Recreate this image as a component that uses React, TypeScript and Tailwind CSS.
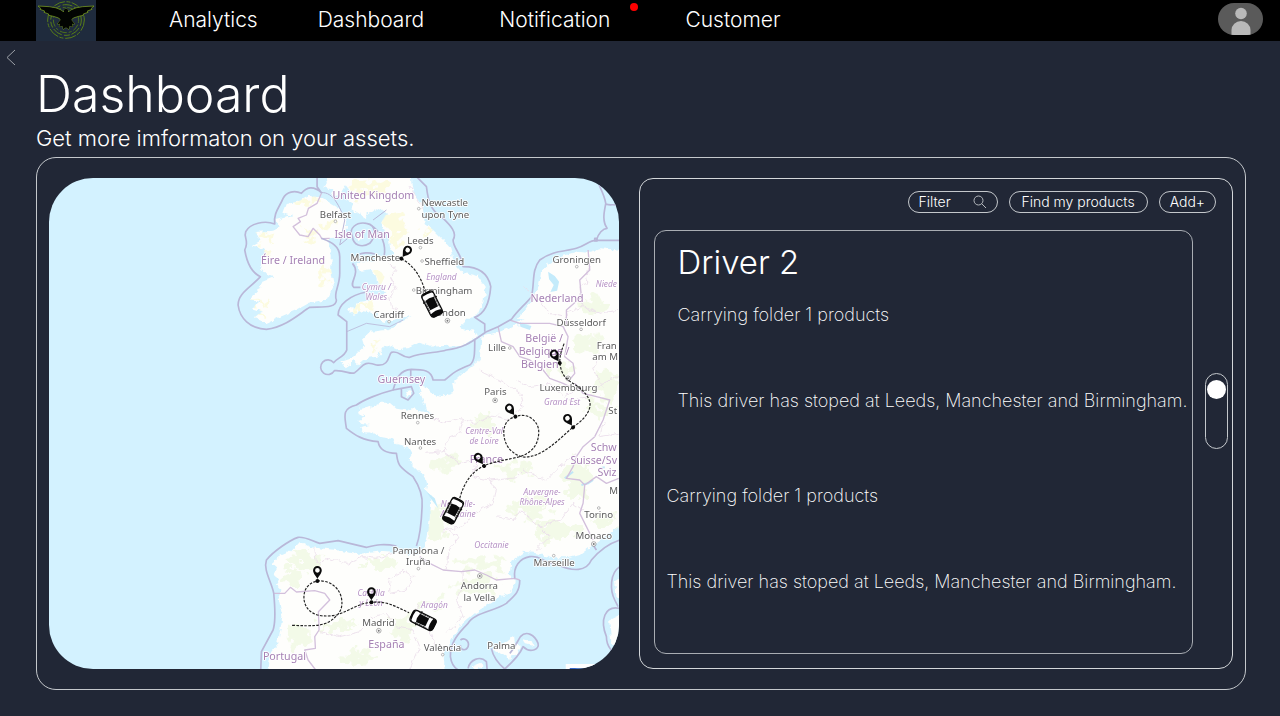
import React, { useState } from "react";

type Tone = "city" | "country" | "region";

interface MapLabel {
  x: number;
  y: number;
  text: string;
  tone: Tone;
}

const toneStyles: Record<Tone, string> = {
  city: "text-[29px] fill-[#5c5c5c]",
  country: "text-[32px] fill-[#a682b4]",
  region: "text-[25px] italic fill-[#b692c4]",
};

const mapLabels: MapLabel[] = [
  { x: 431, y: 88, text: "United Kingdom", tone: "country" },
  { x: 317, y: 143, text: "Belfast", tone: "city" },
  { x: 397, y: 204, text: "Isle of Man", tone: "country" },
  { x: 190, y: 283, text: "Éire / Ireland", tone: "country" },
  { x: 645, y: 109, text: "Newcastle", tone: "city" },
  { x: 647, y: 143, text: "upon Tyne", tone: "city" },
  { x: 572, y: 223, text: "Leeds", tone: "city" },
  { x: 437, y: 274, text: "Mancheste", tone: "city" },
  { x: 644, y: 284, text: "Sheffield", tone: "city" },
  { x: 635, y: 330, text: "England", tone: "region" },
  { x: 643, y: 371, text: "Birmingham", tone: "city" },
  { x: 440, y: 359, text: "Cymru /", tone: "region" },
  { x: 440, y: 389, text: "Wales", tone: "region" },
  { x: 477, y: 444, text: "Cardiff", tone: "city" },
  { x: 656, y: 437, text: "London", tone: "city" },
  { x: 515, y: 640, text: "Guernsey", tone: "country" },
  { x: 1041, y: 280, text: "Groningen", tone: "city" },
  { x: 1130, y: 352, text: "Niede", tone: "region" },
  { x: 982, y: 395, text: "Nederland", tone: "country" },
  { x: 1054, y: 468, text: "Düsseldorf", tone: "city" },
  { x: 943, y: 517, text: "België /", tone: "country" },
  { x: 943, y: 555, text: "Belgique /", tone: "country" },
  { x: 930, y: 593, text: "Belgien", tone: "country" },
  { x: 1131, y: 536, text: "Fran", tone: "city" },
  { x: 1126, y: 570, text: "am M", tone: "city" },
  { x: 802, y: 543, text: "Lille", tone: "city" },
  { x: 1016, y: 663, text: "Luxembourg", tone: "city" },
  { x: 797, y: 676, text: "Paris", tone: "city" },
  { x: 997, y: 706, text: "Grand Est", tone: "region" },
  { x: 1149, y: 731, text: "St", tone: "city" },
  { x: 563, y: 747, text: "Rennes", tone: "city" },
  { x: 571, y: 824, text: "Nantes", tone: "city" },
  { x: 763, y: 792, text: "Centre-Val", tone: "region" },
  { x: 763, y: 822, text: "de Loire", tone: "region" },
  { x: 770, y: 880, text: "France", tone: "country" },
  { x: 1122, y: 842, text: "Schw", tone: "country" },
  { x: 1092, y: 881, text: "Suisse/Sv", tone: "country" },
  { x: 1132, y: 918, text: "Sviz", tone: "country" },
  { x: 937, y: 975, text: "Auvergne-", tone: "region" },
  { x: 937, y: 1005, text: "Rhône-Alpes", tone: "region" },
  { x: 685, y: 1012, text: "Nouvelle-", tone: "region" },
  { x: 685, y: 1042, text: "Aquitaine", tone: "region" },
  { x: 1152, y: 972, text: "M", tone: "city" },
  { x: 1107, y: 1045, text: "Torino", tone: "city" },
  { x: 1092, y: 1108, text: "Monaco", tone: "city" },
  { x: 973, y: 1188, text: "Marseille", tone: "city" },
  { x: 785, y: 1134, text: "Occitanie", tone: "region" },
  { x: 566, y: 1151, text: "Pamplona /", tone: "city" },
  { x: 566, y: 1186, text: "Iruña", tone: "city" },
  { x: 749, y: 1258, text: "Andorra", tone: "city" },
  { x: 749, y: 1293, text: "la Vella", tone: "city" },
  { x: 614, y: 1315, text: "Aragón", tone: "region" },
  { x: 424, y: 1279, text: "Castilla", tone: "region" },
  { x: 424, y: 1309, text: "y León", tone: "region" },
  { x: 446, y: 1367, text: "Madrid", tone: "city" },
  { x: 470, y: 1433, text: "España", tone: "country" },
  { x: 638, y: 1443, text: "València", tone: "city" },
  { x: 815, y: 1436, text: "Palma", tone: "city" },
  { x: 164, y: 1469, text: "Portugal", tone: "country" },
];

const towns = [
  [317, 154], [567, 116], [572, 233], [577, 273], [552, 360], [478, 455], [1041, 290],
  [1054, 478], [840, 534], [564, 758], [572, 834], [1107, 1014], [972, 1157], [566, 1196], [639, 1454],
];

const capitals = [[653, 452], [1015, 625], [796, 691], [1092, 1122], [750, 1218], [447, 1382]];

// pale patches of forest and upland: x, y, rx, ry
const woods = [
  [1080, 520, 50, 26], [1130, 640, 34, 50], [1000, 600, 40, 18], [1110, 720, 40, 24], [900, 1010, 60, 34],
  [620, 1060, 34, 60], [980, 1080, 70, 30], [1040, 930, 40, 60], [760, 1180, 70, 18], [740, 1250, 60, 26],
  [450, 1180, 50, 14], [230, 1170, 50, 24], [190, 1220, 34, 26], [330, 1370, 50, 14], [520, 1380, 30, 44],
  [210, 1400, 30, 40], [760, 760, 40, 22], [650, 880, 30, 26], [860, 900, 50, 20], [600, 1300, 40, 18],
  [1090, 400, 34, 30], [1130, 1050, 30, 24], [380, 1460, 60, 18],
];

const uplands = [
  [420, 55, 60, 26], [490, 155, 34, 36], [500, 215, 18, 30], [220, 100, 34, 14], [110, 195, 26, 10],
  [80, 395, 24, 8], [90, 435, 26, 8], [290, 310, 14, 30], [430, 340, 16, 34], [400, 400, 26, 10],
  [432, 535, 8, 16], [600, 175, 26, 10], [240, 195, 18, 10], [290, 165, 16, 12], [90, 250, 14, 12],
];

function Pin({ x, y, turn = 0 }: { x: number; y: number; turn?: number }) {
  return (
    <g transform={`translate(${x} ${y}) rotate(${turn})`}>
      <circle r="6" fill="#0b0b0b" />
      <path
        fillRule="evenodd"
        fill="#0b0b0b"
        d="M0 -6C-4 -15 -13 -22 -13 -32A13 13 0 1 1 13 -32C13 -22 4 -15 0 -6ZM0 -39A7 7 0 1 0 0 -25A7 7 0 1 0 0 -39Z"
      />
    </g>
  );
}

function Car({ x, y, turn }: { x: number; y: number; turn: number }) {
  return (
    <g transform={`translate(${x} ${y}) rotate(${turn})`}>
      <rect x="-19" y="-38" width="38" height="76" rx="10" fill="#fff" stroke="#0b0b0b" strokeWidth="4" />
      <path d="M-19 -27Q-17 -39 0 -39Q17 -39 19 -27L14 -32Q0 -35 -14 -32Z" fill="#0b0b0b" />
      <path d="M-14 -17Q0 -22 14 -17L13 14L-13 14Z" fill="#0b0b0b" />
      <path d="M-18 26Q0 20 18 26L18 34Q16 39 10 39L-10 39Q-16 39 -18 34Z" fill="#0b0b0b" />
      <path d="M-16 -20V20M16 -20V20" stroke="#0b0b0b" strokeWidth="2" strokeDasharray="10 3" />
      <path d="M-23 -14H-19M19 -14H23" stroke="#0b0b0b" strokeWidth="4" />
    </g>
  );
}

function AssetMap() {
  return (
    <svg
      viewBox="-543 24 1710 1473"
      preserveAspectRatio="xMidYMid slice"
      role="img"
      aria-label="Asset map"
      className="block size-full bg-[#d3f2ff]"
    >
      <defs>
        <path
          id="continent"
          d="M1180 240L1110 235L1080 245L1050 243L1000 258L950 285L935 300L928 345L905 395L880 430L860 446L885 448L862 456L902 462L850 468L810 485L755 500L750 570L700 610L668 640L672 665L632 680L604 672L598 655L572 646L570 665L580 690L590 722L612 735L570 722L552 712L540 722L500 716L480 698L450 698L430 708L388 718L385 730L408 742L386 750L398 762L420 765L388 772L400 785L430 790L450 800L490 808L500 822L535 832L545 850L540 875L565 900L585 918L592 940L588 960L605 985L600 1050L592 1110L580 1142L560 1155L520 1150L450 1145L380 1152L320 1140L240 1132L220 1122L200 1124L180 1145L150 1158L125 1180L142 1195L132 1215L148 1228L138 1245L155 1262L146 1282L158 1340L145 1420L122 1450L115 1510H645L642 1460L650 1435L670 1400L700 1360L735 1330L800 1290L845 1265L855 1235L840 1210L845 1175L885 1145L920 1150L970 1165L1015 1165L1050 1155L1090 1125L1140 1090L1180 1062Z"
        />
        <path
          id="britain"
          d="M285 10L295 40L280 52L310 60L302 80L332 74L348 46L366 70L350 92L372 100L365 118L402 142L440 115L472 128L455 158L465 185L478 205L480 232L494 252L470 262L440 262L430 276L402 272L378 282L392 302L424 298L440 318L450 345L470 370L440 378L420 392L390 395L355 422L372 434L400 424L440 432L452 450L480 456L505 444L545 438L512 458L468 480L420 485L398 508L402 530L370 560L332 574L345 592L372 574L385 586L410 565L440 560L470 524L500 538L540 534L570 518L600 530L700 525L742 500L735 482L700 478L690 470L718 445L745 430L762 390L768 350L745 318L700 308L672 275L662 235L640 210L610 180L585 160L578 105L552 70L545 10Z"
        />
        <path
          id="ireland"
          d="M272 82L235 78L205 95L168 102L158 128L188 138L140 150L150 172L130 182L78 186L92 212L68 226L102 236L106 260L90 290L112 315L132 322L98 335L84 365L60 388L92 392L66 415L96 425L75 442L112 460L152 440L200 420L240 398L292 386L312 345L304 300L306 260L298 225L286 208L318 206L346 190L350 150L320 110Z"
        />
        <clipPath id="landClip">
          <use href="#continent" />
          <use href="#britain" />
          <use href="#ireland" />
        </clipPath>
        <filter id="terrain" x="-20%" y="-20%" width="140%" height="140%">
          <feTurbulence type="fractalNoise" baseFrequency="0.03" numOctaves="3" seed="4" />
          <feDisplacementMap in="SourceGraphic" scale="90" xChannelSelector="R" yChannelSelector="G" />
        </filter>
        <filter id="coast" x="-5%" y="-5%" width="110%" height="110%">
          <feTurbulence type="fractalNoise" baseFrequency="0.06" numOctaves="2" seed="9" />
          <feDisplacementMap in="SourceGraphic" scale="18" xChannelSelector="R" yChannelSelector="G" />
        </filter>
      </defs>

      <g fill="#fefefc" filter="url(#coast)">
        <use href="#continent" />
        <use href="#britain" />
        <use href="#ireland" />
        <path d="M782 1438L822 1420L850 1398L852 1415L872 1432L858 1452L838 1466L815 1452ZM878 1408L905 1412L912 1426L884 1418ZM728 1488L752 1478L758 1490L740 1500ZM1138 1350L1180 1330V1440L1145 1425ZM1156 1230L1180 1215V1300L1160 1280ZM382 202L405 180L395 205L386 214ZM526 668L545 662L548 676L530 680Z" />
      </g>

      <g clipPath="url(#landClip)">
        <g filter="url(#terrain)">
          {woods.map(([x, y, rx, ry]) => (
            <ellipse key={`${x}-${y}`} cx={x} cy={y} rx={rx} ry={ry} fill="#f2f9e6" opacity="0.9" />
          ))}
          {uplands.map(([x, y, rx, ry]) => (
            <ellipse key={`${x}-${y}`} cx={x} cy={y} rx={rx} ry={ry} fill="#fcfbe0" />
          ))}
        </g>
      </g>

      {/* inland water */}
      <path
        d="M955 305L975 318L988 335L982 362L962 366L972 345L958 328ZM870 458L905 468L900 480L872 470ZM1095 1245L1100 1240M590 965L615 985L625 1015L608 992Z"
        fill="#c4ebfb"
      />
      <path d="M1005 925L1030 905M1055 945L1075 940L1090 930M1110 895L1125 892" stroke="#bfe6f7" strokeWidth="6" fill="none" />

      {/* regional borders */}
      <g fill="none" stroke="#eaddeb" strokeWidth="2.5" strokeLinejoin="round" filter="url(#coast)">
        <path d="M540 50L565 90L580 120M478 280L500 300L482 320L498 350L480 380L485 410L505 420" />
        <path d="M600 740L640 760L690 745L740 760L790 735L840 750L880 710L870 670L830 640L790 620L750 600" />
        <path d="M590 850L640 845L660 800L690 790L700 750M640 845L690 880L740 870L730 920L780 930L860 920L880 900L950 930L980 900L1040 850" />
        <path d="M640 1080L700 1070L730 1030L790 1000L800 960L780 930M800 1040L850 1050L870 1020L930 1070L990 1050L1030 1000L1060 1020" />
        <path d="M650 1195L655 1140L690 1100L650 1080M930 1070L960 1100L920 1140M860 630L900 650L960 640L1000 680L1060 650" />
        <path d="M255 1135L260 1180L300 1165L350 1180L400 1160L440 1165L490 1150M480 1230L520 1200L550 1220L530 1260L480 1270ZM270 1385L330 1400L390 1385L430 1340L470 1330L500 1370L550 1380L570 1430L540 1497" />
        <path d="M700 1200L700 1250L680 1290L700 1340L650 1390M570 1300L550 1340L600 1380L620 1440" />
        <path d="M1080 270L1070 340L1050 350L1060 410L1010 430L1005 460M1060 410L1110 430L1167 420M1020 690L1080 680L1120 640L1167 620" />
        <path d="M880 350L920 380L960 430L1000 440M1110 560L1090 600L1120 650M1120 760L1110 800L1167 790" />
      </g>

      {/* national borders */}
      <g fill="none" stroke="#d3c0dc" strokeWidth="4" strokeLinejoin="round">
        <path d="M275 70L262 100L236 115L230 135L205 145L212 155L190 170L210 195L235 200L250 175L270 195L276 206L300 205" />
        <path d="M805 470L815 515L850 530L870 560L900 570L940 600L960 625L1000 640L1020 650M840 450L870 460L920 460L960 460L1000 470L1015 500L1005 560L1030 580L1035 610L1015 635M1035 640L1060 670L1100 680L1140 690L1120 750L1095 800" />
        <path d="M1095 800L1060 830L1040 860L1030 890L1010 925L1050 930L1065 945L1060 1000L1050 1030L1070 1070L1090 1110M1065 945L1100 920L1130 940L1167 925" />
        <path d="M570 1160L600 1180L640 1200L695 1205L735 1200L770 1215L800 1230L855 1225L870 1230" />
        <path d="M133 1270L165 1270L182 1252L200 1266L255 1262L285 1270L300 1290L266 1325L268 1380L255 1400L257 1435L225 1440L235 1470L258 1500" />
        <path d="M1075 240L1080 300L1050 330L1055 380L1010 420L1010 470" />
      </g>

      {/* maritime limits */}
      <g fill="none" stroke="#b9b7d8" strokeWidth="5" strokeLinejoin="round">
        <path d="M262 20V50L275 68C250 45 230 52 215 70C195 60 170 65 160 85C150 110 130 130 135 162C105 150 60 160 48 185C40 205 60 210 45 240C50 270 60 305 92 320C60 355 25 370 25 405C30 445 60 475 110 478C170 470 210 430 240 412C280 410 320 415 320 390C310 370 330 350 330 310V260C330 225 300 215 275 205" />
        <path d="M275 68C310 65 330 110 345 150L330 225L360 200M470 120L430 150" strokeWidth="3" />
        <path d="M368 200C355 175 380 155 410 160C445 165 435 205 420 220C395 235 370 225 368 200ZM430 170C455 190 470 225 463 260M435 252C415 245 395 250 390 252M368 280C395 310 355 340 372 352H392M410 366C360 375 325 405 325 435L351 455V540C345 560 320 565 312 578A22 22 0 1 0 314 602C350 600 360 615 375 608C400 590 400 570 440 585C480 590 475 555 485 547C510 540 515 565 540 562C580 545 620 550 650 540C700 535 720 520 770 485L805 470L845 448C860 425 890 400 905 380C915 340 905 300 930 270C970 240 1010 245 1040 235C1070 225 1080 210 1100 211H1170" />
        <path d="M765 485V462L735 442C770 430 780 390 783 350C775 310 750 290 700 290C695 250 670 235 670 210C685 185 655 160 635 140C600 120 595 90 590 50L560 20M735 510C735 550 735 575 720 585C670 605 670 610 645 630H610C605 600 580 598 545 598C510 600 500 625 490 660C450 670 400 690 380 705C335 715 345 740 350 775C375 795 400 812 445 815C450 845 480 850 500 850C505 880 500 885 550 920C570 950 580 980 577 1010C575 1060 570 1100 560 1128" />
        <path d="M351 485L410 460L480 470L520 450" strokeWidth="2.5" />
        <path d="M543 598V620M490 660L515 655V680L535 690L552 670L545 650L515 655" />
        <path d="M500 1128C460 1120 440 1125 410 1132L325 1112L270 1120C250 1115 230 1100 205 1102C180 1110 130 1145 110 1170C100 1200 125 1235 132 1270C135 1310 140 1350 130 1380L95 1445L93 1500" />
        <path d="M870 1230C870 1270 850 1280 830 1300C790 1325 730 1330 715 1360C685 1390 660 1420 662 1460C665 1485 680 1497 685 1500M855 1225C850 1190 870 1165 900 1160C935 1155 940 1180 985 1185C1030 1205 1070 1205 1085 1170C1110 1140 1140 1120 1170 1110M1090 1125L1100 1140" />
        <path d="M785 1435C790 1460 805 1480 825 1497C850 1475 870 1455 880 1430C900 1450 930 1440 925 1420C915 1395 890 1380 872 1400C860 1420 850 1440 840 1450M692 1410C705 1400 720 1415 715 1430C708 1445 690 1440 692 1425M715 1495C720 1470 750 1455 770 1475L772 1497M1170 1190C1140 1210 1140 1260 1155 1290L1165 1310M1170 1315C1125 1305 1110 1350 1130 1400C1130 1430 1150 1450 1167 1455" />
        <path d="M1100 211C1105 190 1120 175 1132 175C1115 150 1125 120 1128 100C1125 80 1115 60 1108 45M1128 102C1145 108 1150 100 1167 108M1095 205H1102V213H1095Z" />
      </g>

      {towns.map(([x, y]) => (
        <circle key={`${x}-${y}`} cx={x} cy={y} r="4" fill="#fff" stroke="#999" strokeWidth="2" />
      ))}
      {capitals.map(([x, y]) => (
        <g key={`${x}-${y}`}>
          <circle cx={x} cy={y} r="7" fill="#fff" stroke="#888" strokeWidth="2" />
          <circle cx={x} cy={y} r="3" fill="#777" />
        </g>
      ))}

      <g className="font-['Noto_Sans',sans-serif] font-normal" textAnchor="middle" stroke="#fff" strokeWidth="5" strokeLinejoin="round" paintOrder="stroke">
        {mapLabels.map((label) => (
          <text key={`${label.text}-${label.y}`} x={label.x} y={label.y} className={toneStyles[label.tone]}>
            {label.text}
          </text>
        ))}
      </g>

      {/* routes */}
      <g fill="none" stroke="#222" strokeWidth="3.5" strokeDasharray="8 4">
        <path d="M515 266C550 285 575 320 586 365" />
        <path d="M1003 521C992 550 990 560 990 580C995 610 1005 625 1025 637C1055 655 1082 680 1081 705C1080 730 1055 755 1030 771C985 810 935 865 880 861C835 850 822 815 822 785C824 755 840 745 857 740C895 725 927 755 927 785C927 830 900 850 870 860C830 870 790 875 763 887C725 905 702 940 690 985" />
        <path d="M187 1366C250 1368 290 1372 320 1337C340 1320 338 1295 334 1280C325 1245 290 1230 263 1233C230 1240 220 1265 223 1290C230 1330 265 1345 320 1335C365 1320 385 1300 425 1297C475 1292 500 1312 538 1328" />
      </g>

      <Pin x={515} y={266} turn={36} />
      <Pin x={990} y={579} turn={-32} />
      <Pin x={857} y={740} turn={-35} />
      <Pin x={1030} y={772} turn={-32} />
      <Pin x={763} y={888} turn={-34} />
      <Pin x={263} y={1233} />
      <Pin x={425} y={1297} />
      <Car x={607} y={402} turn={-27} />
      <Car x={670} y={1022} turn={27} />
      <Car x={580} y={1351} turn={-64} />

      <path d="M1008 1482H1167V1500H1008Z" fill="#fff" />
      <path d="M1020 1494H1065V1500H1020Z" fill="#3566c8" />
    </svg>
  );
}

function EagleLogo() {
  return (
    <svg viewBox="0 0 180 123" className="block h-[41px] w-[60px] bg-[#1f2b3d]" aria-hidden="true">
      <g fill="none" stroke="#577d18" strokeWidth="3">
        <circle cx="90" cy="60" r="55" strokeDasharray="34 5 12 4" />
        <circle cx="90" cy="60" r="46" strokeDasharray="18 7 30 5" />
        <circle cx="90" cy="60" r="38" strokeDasharray="9 5 22 6" stroke="#4b6f1c" />
      </g>
      <path
        d="M6 18L40 20Q62 22 76 30Q80 36 84 35Q82 27 90 26Q98 27 96 35Q100 36 104 30Q118 22 140 20L174 18L166 25L168 28L154 33L156 37L142 42L142 46L128 49L112 54L106 60L116 72L108 71L110 80L101 77L98 88L90 82L82 88L79 77L70 80L72 71L64 72L74 60L68 54L52 49L38 46L38 42L24 37L26 33L12 28L14 25Z"
        fill="#020402"
        stroke="#86ae20"
        strokeWidth="2"
        strokeLinejoin="round"
      />
      <path d="M72 32Q80 38 84 35Q82 27 90 26Q98 27 96 35Q100 38 108 32L106 60L116 72L108 71L110 80L101 77L98 88L90 82L82 88L79 77L70 80L72 71L64 72L74 60Z" fill="#020402" />
    </svg>
  );
}

const stops = [
  { folder: "Carrying folder 1 products", route: "This driver has stoped at Leeds, Manchester and Birmingham." },
  { folder: "Carrying folder 1 products", route: "This driver has stoped at Leeds, Manchester and Birmingham." },
];

export default function App() {
  const [scroll, setScroll] = useState(10);

  return (
    <div className="flex min-h-screen flex-col bg-[#212736] font-['Inter',sans-serif] font-light text-white">
      <header className="flex h-[41px] items-start bg-black pr-[17px] pl-9">
        <a href="#home" aria-label="Home">
          <EagleLogo />
        </a>
        <nav className="mt-[6px] ml-[73px] flex gap-[60px] text-[21px] leading-7">
          <a href="#analytics">Analytics</a>
          <a href="#dashboard">Dashboard</a>
          <a href="#notification" className="relative mx-[15px]">
            Notification
            <span className="absolute -top-[3px] -right-7 size-2 rounded-full bg-[#ff0000]" />
          </a>
          <a href="#customer">Customer</a>
        </nav>
        <button aria-label="Account" className="mt-[3px] ml-auto overflow-hidden rounded-full">
          <svg viewBox="0 0 45 32" className="block h-8 w-[45px] bg-[#5a5a5a]" aria-hidden="true">
            <circle cx="23" cy="10.500" r="5.800" fill="#b9b9b9" />
            <path d="M13.500 32V27A9.500 9 0 0 1 32.500 27V32Z" fill="#b9b9b9" />
          </svg>
        </button>
      </header>

      <main className="flex flex-1 pr-[34px] pb-[26px]">
        <div className="w-9 shrink-0 pt-2 pl-[6px]">
          <button aria-label="Back" className="block">
            <svg viewBox="0 0 10 17" className="block h-[17px] w-[10px]" fill="none" stroke="#9da1a8" aria-hidden="true">
              <path d="M9 1L1 8.500L9 16" />
            </svg>
          </button>
        </div>

        <div className="flex flex-1 flex-col">
          <h1 className="pt-[23px] text-[50px] leading-[60px]">Dashboard</h1>
          <p className="text-[22px] leading-7">Get more imformaton on your assets.</p>

          <section className="mt-[5px] grid flex-1 grid-cols-[570fr_595fr] gap-5 rounded-[20px] border border-[#c4c8cc] px-3 py-5">
            <div className="relative overflow-hidden rounded-[44px]">
              <div className="absolute inset-0">
                <AssetMap />
              </div>
            </div>

            <div className="flex flex-col rounded-[14px] border border-[#d4d7da] pt-3 pr-1 pb-[14px] pl-[14px]">
              <div className="mr-3 flex justify-end gap-[11px] text-[14px] leading-5">
                <button className="flex w-[90px] items-center justify-between rounded-full border border-[#c4c8cc] px-[10px]">
                  Filter
                  <svg viewBox="0 0 14 14" className="size-[14px]" fill="none" stroke="#b4b8bd" aria-hidden="true">
                    <circle cx="5.500" cy="5.500" r="4.500" />
                    <path d="M8.500 8.500L13 13" />
                  </svg>
                </button>
                <button className="rounded-full border border-[#c4c8cc] px-3">Find my products</button>
                <button className="rounded-full border border-[#c4c8cc] px-[10px]">Add+</button>
              </div>

              <div className="mt-[17px] flex flex-1 items-center gap-3">
                <article className="flex-1 self-stretch rounded-[12px] border border-[#a9adb3] pt-[11px] text-[18px] leading-6 font-extralight whitespace-nowrap">
                  <h2 className="pl-[23px] text-[33px] leading-10 font-light">Driver 2</h2>
                  <div className="pt-[21px] pl-[23px]">
                    <p>{stops[0].folder}</p>
                    <p className="pt-[62px]">{stops[0].route}</p>
                  </div>
                  <div className="pt-[71px] pl-3">
                    <p>{stops[1].folder}</p>
                    <p className="pt-[62px]">{stops[1].route}</p>
                  </div>
                </article>
                <input
                  type="range"
                  aria-label="Scroll drivers"
                  value={scroll}
                  onChange={(e) => setScroll(Number(e.target.value))}
                  className="mb-[62px] h-[76px] w-[23px] appearance-none rounded-full border border-[#c4c8cc] bg-transparent [writing-mode:vertical-lr] [&::-webkit-slider-thumb]:size-[19px] [&::-webkit-slider-thumb]:appearance-none [&::-webkit-slider-thumb]:rounded-full [&::-webkit-slider-thumb]:bg-white"
                />
              </div>
            </div>
          </section>
        </div>
      </main>
    </div>
  );
}
